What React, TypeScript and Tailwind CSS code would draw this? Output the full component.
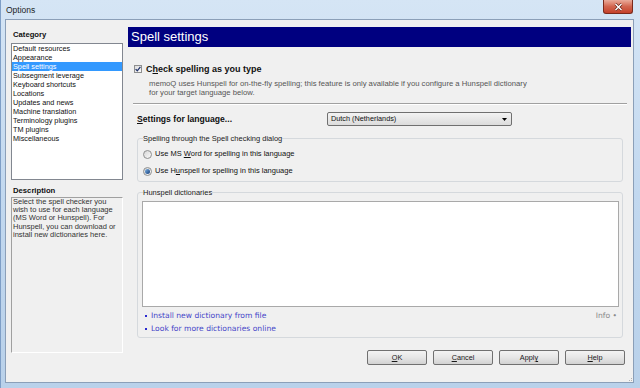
import React from "react";

const categories = [
  "Default resources",
  "Appearance",
  "Spell settings",
  "Subsegment leverage",
  "Keyboard shortcuts",
  "Locations",
  "Updates and news",
  "Machine translation",
  "Terminology plugins",
  "TM plugins",
  "Miscellaneous",
];

const CheckBox = () => (
  <div className="w-[8px] h-[8px] border border-[#8e8f8f] bg-gradient-to-br from-[#dcdcdc] to-[#fbfbfb] flex items-center justify-center">
    <svg width="6" height="6" viewBox="0 0 6 6">
      <path d="M0.6 3.1 L2.3 4.8 L5.4 0.9" stroke="#21336b" strokeWidth="1.3" fill="none" />
    </svg>
  </div>
);

const Radio = ({ checked }: { checked?: boolean }) => (
  <div className="w-[9px] h-[9px] rounded-full border border-[#8e8f8f] bg-gradient-to-br from-[#d6d6d6] to-[#fafafa] flex items-center justify-center">
    {checked && (
      <div className="w-[5px] h-[5px] rounded-full bg-gradient-to-br from-[#7fb4e6] to-[#173f7a]" />
    )}
  </div>
);

const WinButton = ({ children }: { children: React.ReactNode }) => (
  <button className="w-[60px] h-[15px] rounded-[2px] border border-[#707070] bg-gradient-to-b from-[#f3f3f3] via-[#e6e6e6] to-[#d2d2d2] text-[7.3px] leading-[13px] text-[#1a1a1a] flex items-center justify-center">
    {children}
  </button>
);

export default function App() {
  return (
    <div className="w-[640px] h-[388px] overflow-hidden flex flex-col bg-gradient-to-b from-[#d5e5f5] via-[#c2d8ef] to-[#b9d1ea] border-l border-[#7e9ec6] font-['Liberation_Sans',Arial,sans-serif] text-[7.3px] text-[#111]">
      {/* Title bar */}
      <div className="h-[19px] shrink-0 flex items-start">
        <span className="ml-[5px] mt-[5px] text-[8.5px] leading-[10px] text-[#1e1e1e]">Options</span>
        <div className="ml-auto mr-[7px] w-[30px] h-[14px] rounded-b-[3px] border border-t-0 border-[#7a2a1c] bg-gradient-to-b from-[#e9ab9b] via-[#d2654f] to-[#c4402a] flex items-center justify-center">
          <svg width="9" height="8" viewBox="0 0 9 8">
            <path d="M1.5 1 L7.5 7 M7.5 1 L1.5 7" stroke="#5a1a10" strokeWidth="2.6" />
            <path d="M1.5 1 L7.5 7 M7.5 1 L1.5 7" stroke="#ffffff" strokeWidth="1.5" />
          </svg>
        </div>
      </div>

      {/* Client area */}
      <div className="ml-[4px] w-[629px] h-[364px] shrink-0 border border-[#8b9fb8] bg-[#f0f0f0] relative">
        <div className="flex pt-[7px] pl-[5px] gap-[5px]">
          {/* Left column */}
          <div className="w-[112px] flex flex-col">
            <div className="h-[16px] pt-[3px] pl-[2px] font-bold text-[7.7px] leading-[9px]">Category</div>
            <div className="h-[137px] border border-[#828790] bg-white pt-0">
              {categories.map((c) => (
                <div
                  key={c}
                  className={
                    c === "Spell settings"
                      ? "h-[9px] leading-[9px] pl-[1px] bg-[#3399ff] text-white"
                      : "h-[9px] leading-[9px] pl-[1px]"
                  }
                >
                  {c}
                </div>
              ))}
            </div>
            <div className="h-[17px] pt-[6px] pl-[2px] font-bold text-[7.7px] leading-[9px]">Description</div>
            <div className="h-[156px] border border-t-[#a0a0a0] border-l-[#a0a0a0] border-r-white border-b-white pl-[1px] text-[7.5px] leading-[8.2px] text-[#333]">
              Select the spell checker you
              <br />
              wish to use for each language
              <br />
              (MS Word or Hunspell). For
              <br />
              Hunspell, you can download or
              <br />
              install new dictionaries here.
            </div>
          </div>

          {/* Right column */}
          <div className="w-[503px] flex flex-col text-[7.5px]">
            <div className="h-[20px] bg-[#000080] text-white text-[13px] leading-[20px] pl-[3px]">Spell settings</div>

            <div className="mt-[17px] h-[10px] ml-[6px] flex items-center gap-[4px]">
              <CheckBox />
              <span className="font-bold text-[9px] leading-[10px]">
                C<u>h</u>eck spelling as you type
              </span>
            </div>
            <p className="mt-[5px] pl-[21px] text-[7.7px] leading-[9px] text-[#555]">
              memoQ uses Hunspell for on-the-fly spelling; this feature is only available if you configure a Hunspell dictionary
              <br />
              for your target language below.
            </p>

            <div className="mt-[6px] ml-[5px] mr-[4px] h-px bg-[#a0a0a0] border-b border-white box-content" />

            <div className="mt-[7px] h-[14px] flex items-center">
              <span className="ml-[9px] w-[190px] font-bold text-[8.6px]">
                <u>S</u>ettings for language...
              </span>
              <div className="w-[185px] h-[14px] rounded-[2px] border border-[#707070] bg-gradient-to-b from-[#f3f3f3] to-[#dcdcdc] flex items-center pl-[3px] pr-[4px] text-[7.3px]">
                <span className="flex-1 leading-[12px]">Dutch (Netherlands)</span>
                <svg width="5" height="3" viewBox="0 0 5 3">
                  <path d="M0 0 H5 L2.5 3 Z" fill="#000" />
                </svg>
              </div>
            </div>

            <fieldset className="mt-[8px] ml-[9px] w-[486px] border border-[#d5d9dd] rounded-[3px] pl-[4px] pr-[3px] pb-[5px]">
              <legend className="ml-[1px] leading-[9px] text-[#222]">Spelling through the Spell checking dialog</legend>
              <div className="mt-[6px] ml-[1px] h-[10px] flex items-center gap-[3px]">
                <Radio />
                <span>
                  Use MS <u>W</u>ord for spelling in this language
                </span>
              </div>
              <div className="mt-[7px] ml-[1px] h-[10px] flex items-center gap-[3px]">
                <Radio checked />
                <span>
                  Use H<u>u</u>nspell for spelling in this language
                </span>
              </div>
            </fieldset>

            <fieldset className="mt-[6px] ml-[9px] w-[486px] border border-[#d5d9dd] rounded-[3px] pl-[4px] pr-[3px] pb-[4px]">
              <legend className="ml-[1px] leading-[9px] text-[#222]">Hunspell dictionaries</legend>
              <div className="mt-[4px] h-[106px] border border-[#a9a9a9] bg-white" />
              <div className="mt-[4px] h-[9px] flex items-center font-['DejaVu_Sans',Verdana,sans-serif] text-[7.6px] leading-[9px]">
                <span className="ml-[3px] w-[2px] h-[2px] bg-[#2a2ad0]" />
                <span className="ml-[4px] text-[#4646c8]">Install new dictionary from file</span>
                <span className="ml-auto mr-[2px] text-[#8a8a8a]">Info •</span>
              </div>
              <div className="mt-[4px] h-[9px] flex items-center font-['DejaVu_Sans',Verdana,sans-serif] text-[7.6px] leading-[9px]">
                <span className="ml-[3px] w-[2px] h-[2px] bg-[#2a2ad0]" />
                <span className="ml-[4px] text-[#4646c8]">Look for more dictionaries online</span>
              </div>
            </fieldset>

            <div className="mt-[12px] pr-[6px] flex justify-end gap-[6px]">
              <WinButton>
                <u>O</u>K
              </WinButton>
              <WinButton>
                <u>C</u>ancel
              </WinButton>
              <WinButton>
                Appl<u>y</u>
              </WinButton>
              <WinButton>
                <u>H</u>elp
              </WinButton>
            </div>
          </div>
        </div>

        {/* Resize grip */}
        <div className="absolute right-[1px] bottom-[1px] grid grid-cols-3 gap-[1px] opacity-60">
          <span />
          <span />
          <span className="w-[1px] h-[1px] bg-[#888]" />
          <span />
          <span className="w-[1px] h-[1px] bg-[#888]" />
          <span className="w-[1px] h-[1px] bg-[#888]" />
        </div>
      </div>
    </div>
  );
}
